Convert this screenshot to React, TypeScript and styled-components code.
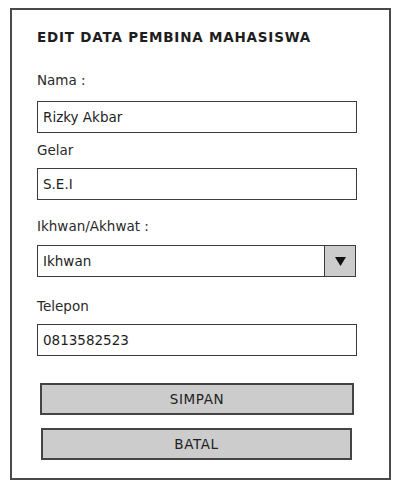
import React from "react";
import styled, { createGlobalStyle } from "styled-components";

const Global = createGlobalStyle`
  html, body { margin: 0; padding: 0; background: #ffffff; }
  body { font-family: "DejaVu Sans", "Liberation Sans", sans-serif; color: #222; }
  * { box-sizing: border-box; }
`;

const Frame = styled.div`
  margin: 8px 0 0 10px;
  width: 381px;
  height: 472px;
  border: 2px solid #4a4a4a;
  padding: 18px 0 0 25px;
  display: flex;
  flex-direction: column;
`;

const Title = styled.h1`
  margin: 0;
  font-size: 13.5px;
  line-height: 18px;
  font-weight: 600;
  letter-spacing: 0.8px;
  color: #1e1e1e;
`;

const Label = styled.div<{ $top: number }>`
  margin-top: ${(p) => p.$top}px;
  font-size: 13.5px;
  line-height: 18px;
  color: #2a2a2a;
`;

const Input = styled.div<{ $top: number }>`
  margin-top: ${(p) => p.$top}px;
  width: 320px;
  height: 32px;
  border: 1.5px solid #3c3c3c;
  display: flex;
  align-items: center;
  padding-left: 5px;
  font-size: 13.5px;
  color: #1e1e1e;
`;

const Select = styled.div<{ $top: number }>`
  margin-top: ${(p) => p.$top}px;
  width: 319px;
  height: 32px;
  border: 1.5px solid #3c3c3c;
  display: flex;
  align-items: stretch;
  font-size: 13.5px;
  color: #1e1e1e;
`;

const SelectValue = styled.div`
  flex: 1;
  display: flex;
  align-items: center;
  padding-left: 5px;
`;

const SelectButton = styled.div`
  width: 31px;
  background: #cccccc;
  border-left: 1.5px solid #3c3c3c;
  display: flex;
  align-items: center;
  justify-content: center;
`;

const Button = styled.div<{ $top: number; $width: number; $left: number }>`
  margin-top: ${(p) => p.$top}px;
  margin-left: ${(p) => p.$left}px;
  width: ${(p) => p.$width}px;
  height: 32px;
  background: #cccccc;
  border: 2px solid #444;
  display: flex;
  align-items: center;
  justify-content: center;
  font-size: 13.5px;
  letter-spacing: 0.6px;
  color: #222;
`;

export default function App() {
  return (
    <>
      <Global />
      <Frame>
        <Title>EDIT DATA PEMBINA MAHASISWA</Title>
        <Label $top={25}>Nama :</Label>
        <Input $top={12}>Rizky Akbar</Input>
        <Label $top={8}>Gelar</Label>
        <Input $top={9}>S.E.I</Input>
        <Label $top={17}>Ikhwan/Akhwat :</Label>
        <Select $top={10}>
          <SelectValue>Ikhwan</SelectValue>
          <SelectButton>
            <svg width="11" height="9" viewBox="0 0 11 9">
              <polygon points="0,0 11,0 5.5,9" fill="#111" />
            </svg>
          </SelectButton>
        </Select>
        <Label $top={20}>Telepon</Label>
        <Input $top={9}>0813582523</Input>
        <Button $top={27} $left={3} $width={314}>SIMPAN</Button>
        <Button $top={13} $left={4} $width={311}>BATAL</Button>
      </Frame>
    </>
  );
}
